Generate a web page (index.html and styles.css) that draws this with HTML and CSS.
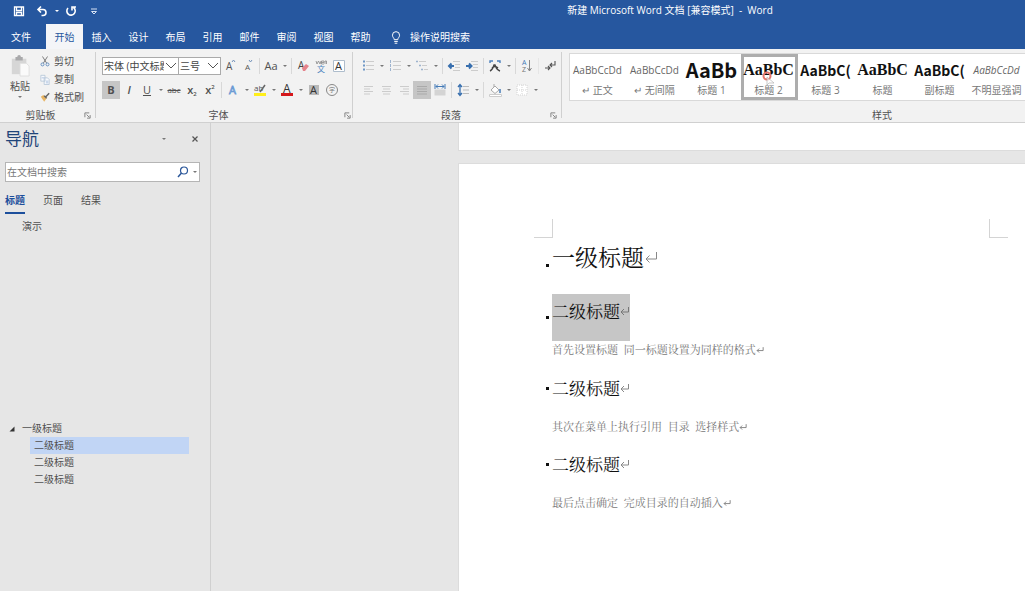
FILE: index.html
```html
<!DOCTYPE html>
<html lang="zh-CN">
<head>
<meta charset="utf-8">
<title>新建 Microsoft Word 文档 [兼容模式] - Word</title>
<link rel="stylesheet" href="styles.css">
</head>
<body>
<header class="top">
  <div class="titlebar">
    <div class="quick">
      <button aria-label="保存"><svg viewBox="0 0 18 18"><path d="M4.500 5h9v8.500h-9z M6.500 5v3.500h5V5 M6.500 13.500v-3h5v3" fill="none" stroke="#fff" stroke-width="1.300"/></svg></button>
      <button aria-label="撤消"><svg viewBox="0 0 18 18"><path d="M5 7.500h5a3 3 0 0 1 0 6H8.500 M8 4.500l-3 3 3 3" fill="none" stroke="#fff" stroke-width="1.600"/></svg></button>
      <button class="caret light" aria-label="撤消选项"></button>
      <button aria-label="重复"><svg viewBox="0 0 18 18"><path d="M6 6a4.200 4.200 0 1 0 5.500-.5 M10 8.500V5h4" fill="none" stroke="#fff" stroke-width="1.600"/></svg></button>
      <button class="customize" aria-label="自定义快速访问工具栏"><svg viewBox="0 0 18 18"><path d="M6 7h6 M6.500 9.500h5L9 12z" fill="none" stroke="#d5e1f3"/></svg></button>
    </div>
    <div class="title">新建 Microsoft Word 文档 [兼容模式]&nbsp; -&nbsp; Word</div>
  </div>
  <nav class="tabs">
    <button class="file">文件</button><button class="active">开始</button><button>插入</button><button>设计</button><button>布局</button><button>引用</button><button>邮件</button><button>审阅</button><button>视图</button><button>帮助</button>
    <button class="tell"><svg viewBox="0 0 18 18"><path d="M7 12c0-2-2-2.500-2-5a4 4 0 0 1 8 0c0 2.500-2 3-2 5z M7 14h4 M7.500 16h3" fill="none" stroke="#fff" stroke-width="1.100"/></svg>操作说明搜索</button>
  </nav>
</header>

<section class="ribbon">
  <div class="group">
    <div class="clipboard">
      <button class="paste"><svg viewBox="0 0 22 24"><path d="M2 4h16v17H2z" fill="#d6d6d6"/><path d="M6 2h2a2 2 0 0 1 4 0h2v4H6z" fill="#a9a9ab"/><path d="M11 9h7l3 3v11H11z" fill="#fafafa" stroke="#ddd"/></svg>粘贴<i class="caret"></i></button>
      <div class="clip-list">
        <button><svg viewBox="0 0 12 12"><path d="M3 0l5 8 M9 0L4 8" fill="none" stroke="#666"/><circle cx="3" cy="9.500" r="1.800" fill="none" stroke="#5383bb"/><circle cx="9" cy="9.500" r="1.800" fill="none" stroke="#5383bb"/></svg>剪切</button>
        <button><svg viewBox="0 0 12 12"><path d="M1 1h5v7H1z M5 4h4l2 2v6H5z" fill="#f7f9fc" stroke="#b6c6d8"/><path d="M2 4h3 M7 8h3 M7 10h3" stroke="#a7bfdd"/></svg>复制</button>
        <button><svg viewBox="0 0 12 12"><path d="M1 5l3-2 4 4-3 4z" fill="#e8b564"/><path d="M5 4l3 3 M7 5l4-4" stroke="#666" stroke-width="1.800"/></svg>格式刷</button>
      </div>
    </div>
    <footer><span>剪贴板</span><button class="launch" aria-label="剪贴板选项"><svg viewBox="0 0 8 8"><path d="M1 6V1h5 M3 3l3 3 M7 3.500V7H3.500" fill="none" stroke="#777"/></svg></button></footer>
  </div>

  <div class="group font-group">
    <div class="tools">
      <div class="row">
        <select class="font" aria-label="字体"><option>宋体 (中文标题)</option></select><select class="size" aria-label="字号"><option>三号</option></select>
        <button aria-label="增大字号"><svg viewBox="0 0 18 18"><text x="5" y="13" font-size="10" fill="#555">A</text><path d="M11 5l1.500-2L14 5" fill="none" stroke="#7392ba"/></svg></button>
        <button aria-label="减小字号"><svg viewBox="0 0 18 18"><text x="6" y="13" font-size="8" fill="#555">A</text><path d="M10 3l1.500 2L13 3" fill="none" stroke="#7392ba"/></svg></button>
        <i class="sep"></i>
        <button class="txt">Aa</button><button class="caret" aria-label="更改大小写选项"></button>
        <i class="sep"></i>
        <button aria-label="清除格式"><svg viewBox="0 0 18 18"><text x="4" y="12" font-size="10" fill="#444">A</text><path d="M8 11l4-4 3 2-4 5H9z" fill="#e5838c"/></svg></button>
        <button aria-label="拼音指南"><svg viewBox="0 0 18 18"><path d="M4 4l1 3 1.500-3L8 7l1-3 M9.500 5.500h2.500V4H9.500v3H12 M13 7V4h1.500v3" fill="none" stroke="#888" stroke-width=".8"/><text x="5" y="15" font-size="8" fill="#4d83bd">文</text></svg></button>
        <button aria-label="字符边框"><svg viewBox="0 0 18 18"><path d="M3.500 3.500h11v11h-11z" fill="#fff" stroke="#aebdcc"/><text x="5" y="13" font-size="11" fill="#333">A</text></svg></button>
      </div>
      <div class="row">
        <button class="on txt bold">B</button><button class="txt italic">I</button><button class="txt under">U</button><button class="caret" aria-label="下划线选项"></button>
        <button class="txt strike">abc</button><button class="txt script">x<sub>2</sub></button><button class="txt script">x<sup>2</sup></button>
        <i class="sep"></i>
        <button aria-label="文本效果"><svg viewBox="0 0 18 18"><text x="5" y="13" font-size="11" fill="#f5faff" stroke="#6d9bd4" stroke-width=".8">A</text></svg></button><button class="caret" aria-label="文本效果选项"></button>
        <button aria-label="突出显示"><svg viewBox="0 0 18 18"><text x="3" y="10" font-size="8" fill="#555">ab</text><path d="M9 11l5-7" stroke="#666" stroke-width="1.500"/><path d="M3 12h12v3H3z" fill="#ffee1a"/></svg></button><button class="caret" aria-label="突出显示选项"></button>
        <button aria-label="字体颜色"><svg viewBox="0 0 18 18"><text x="5" y="12" font-size="12" fill="#333">A</text><path d="M3 12h12v3H3z" fill="#d5171b"/></svg></button><button class="caret" aria-label="字体颜色选项"></button>
        <button aria-label="字符底纹"><svg viewBox="0 0 18 18"><path d="M4 4h10v10H4z" fill="#b9b9b9"/><text x="5" y="13" font-size="11" fill="#333">A</text></svg></button>
        <button aria-label="带圈字符"><svg viewBox="0 0 18 18"><circle cx="9" cy="9" r="5.500" fill="none" stroke="#888"/><text x="6" y="11" font-size="6" fill="#777">字</text></svg></button>
      </div>
    </div>
    <footer><span>字体</span><button class="launch" aria-label="字体选项"><svg viewBox="0 0 8 8"><path d="M1 6V1h5 M3 3l3 3 M7 3.500V7H3.500" fill="none" stroke="#777"/></svg></button></footer>
  </div>

  <div class="group para-group">
    <div class="tools">
      <div class="row">
        <button aria-label="项目符号"><svg viewBox="0 0 18 18"><path d="M7 4.500h8 M7 8.500h8 M7 12.500h8" stroke="#ccc"/><path d="M4 4.500h2 M4 8.500h2 M4 12.500h2" stroke="#6f97c6" stroke-width="2"/></svg></button><button class="caret" aria-label="项目符号选项"></button>
        <button aria-label="编号"><svg viewBox="0 0 18 18"><path d="M7 4.500h8 M7 8.500h8 M7 12.500h8" stroke="#ccc"/><path d="M4.500 3v3 M4.500 7v3 M4.500 11v3" stroke="#9db3ce"/></svg></button><button class="caret" aria-label="编号选项"></button>
        <button aria-label="多级列表"><svg viewBox="0 0 18 18"><path d="M6 4.500h7 M9 8.500h5 M11 12.500h4" stroke="#ccc"/><path d="M3 4.500h2 M6 8.500h2 M8 12.500h2" stroke="#9db3ce" stroke-width="1.500"/></svg></button><button class="caret" aria-label="多级列表选项"></button>
        <i class="sep"></i>
        <button aria-label="减少缩进"><svg viewBox="0 0 18 18"><path d="M8 4.500h7 M10 7.500h5 M10 10.500h5 M8 13.500h7" stroke="#ccc"/><path d="M9 9H4 M6.500 6.500L4 9l2.500 2.500" fill="none" stroke="#386fae" stroke-width="2"/></svg></button>
        <button aria-label="增加缩进"><svg viewBox="0 0 18 18"><path d="M8 4.500h7 M10 7.500h5 M10 10.500h5 M8 13.500h7" stroke="#ccc"/><path d="M3 9h5 M6 6.500L8.500 9 6 11.500" fill="none" stroke="#386fae" stroke-width="2"/></svg></button>
        <i class="sep"></i>
        <button aria-label="中文版式"><svg viewBox="0 0 18 18"><path d="M4 14c2-1 3-3 4-6h1c1 3 2 5 5 6 M6 11c2-2 4-2 6 0" fill="none" stroke="#444" stroke-width="1.400"/><path d="M4 6V4h3 M14 6V4h-3" fill="none" stroke="#4c80bd" stroke-width="1.400"/></svg></button><button class="caret" aria-label="中文版式选项"></button>
        <i class="sep"></i>
        <button aria-label="排序"><svg viewBox="0 0 18 18"><text x="4" y="8" font-size="7" fill="#457bb7">A</text><text x="4" y="15" font-size="7" fill="#777">Z</text><path d="M11.500 3v11 M9.500 11l2 3 2-3" fill="none" stroke="#888"/></svg></button>
        <i class="sep faint"></i>
        <button aria-label="显示编辑标记"><svg viewBox="0 0 18 18"><path d="M14 4v4H9 M11 6L9 8l2 2 M4 11h5 M7 9l2 2-2 2" fill="none" stroke="#555" stroke-width="1.100"/></svg></button>
      </div>
      <div class="row">
        <button aria-label="左对齐"><svg viewBox="0 0 18 18"><path d="M5 5.500h9 M5 8h6 M5 10.500h9 M5 13h6" stroke="#ccc"/></svg></button>
        <button aria-label="居中"><svg viewBox="0 0 18 18"><path d="M5 5.500h9 M6 8h7 M5 10.500h9 M6 13h7" stroke="#ccc"/></svg></button>
        <button aria-label="右对齐"><svg viewBox="0 0 18 18"><path d="M5 5.500h9 M8 8h6 M5 10.500h9 M8 13h6" stroke="#ccc"/></svg></button>
        <button class="on" aria-label="两端对齐"><svg viewBox="0 0 18 18"><path d="M4 5.500h10 M4 8h10 M4 10.500h10 M4 13h10" stroke="#aaa"/></svg></button>
        <button aria-label="分散对齐"><svg viewBox="0 0 18 18"><path d="M4 3v5 M14 3v5 M5 5.500h8 M7 3.500l-2 2 2 2 M11 3.500l2 2-2 2" fill="none" stroke="#457bb7"/><path d="M3.500 8.500h11v6h-11z" fill="#d4d4d4"/></svg></button>
        <i class="sep"></i>
        <button aria-label="行距"><svg viewBox="0 0 18 18"><path d="M9 5.500h6 M9 9h6 M9 12.500h6" stroke="#bbb"/><path d="M6 4v10 M4 6l2-2.500L8 6 M4 12l2 2.500L8 12" fill="none" stroke="#386fae" stroke-width="1.300"/></svg></button><button class="caret" aria-label="行距选项"></button>
        <i class="sep"></i>
        <button aria-label="底纹"><svg viewBox="0 0 18 18"><path d="M5 9l4-4 4 4-4 3.500z M8 6V3" fill="#fff" stroke="#aaa"/><path d="M14 8v4" stroke="#457bb7" stroke-width="1.500"/><path d="M3.500 13.500h12v2h-12z" fill="#fff" stroke="#ccc"/></svg></button><button class="caret" aria-label="底纹选项"></button>
        <button aria-label="边框"><svg viewBox="0 0 18 18"><path d="M4 4h10v10H4z" fill="#fff"/><path d="M4 4h10v10H4z M9 4v10 M4 9h10" fill="none" stroke="#d4d4d4" stroke-dasharray="1 1"/></svg></button><button class="caret" aria-label="边框选项"></button>
      </div>
    </div>
    <footer><span>段落</span><button class="launch" aria-label="段落选项"><svg viewBox="0 0 8 8"><path d="M1 6V1h5 M3 3l3 3 M7 3.500V7H3.500" fill="none" stroke="#777"/></svg></button></footer>
  </div>

  <div class="group styles">
    <div class="gallery">
      <button><b class="s-normal">AaBbCcDd</b><span>↵ 正文</span></button>
      <button><b class="s-normal">AaBbCcDd</b><span>↵ 无间隔</span></button>
      <button><b class="s-h1">AaBb</b><span>标题 1</span></button>
      <button class="picked"><b class="s-serif">AaBbC</b><span>标题 2</span><svg class="pointer" viewBox="0 0 20 20"><circle cx="7" cy="7" r="3.500" fill="none" stroke="#e5766c" stroke-width="2"/><path d="M7 8v8l2-2 5 0z" fill="#fff" fill-opacity=".6" stroke="#aaa" stroke-width=".6"/></svg></button>
      <button><b class="s-h3">AaBbC(</b><span>标题 3</span></button>
      <button><b class="s-serif">AaBbC</b><span>标题</span></button>
      <button><b class="s-h3">AaBbC(</b><span>副标题</span></button>
      <button><b class="s-normal s-subtle">AaBbCcDd</b><span>不明显强调</span></button>
    </div>
    <footer><span>样式</span></footer>
  </div>
</section>

<main class="work">
  <aside class="pane">
    <div class="pane-head"><h2>导航</h2><button class="caret" aria-label="任务窗格选项"></button><button class="close" aria-label="关闭"><svg viewBox="0 0 8 8"><path d="M1.500 1.500l5 5 M6.500 1.500l-5 5" stroke="#555" stroke-width="1.200"/></svg></button></div>
    <div class="search"><input type="text" placeholder="在文档中搜索" aria-label="在文档中搜索"><button aria-label="搜索"><svg viewBox="0 0 12 12"><circle cx="7" cy="4.500" r="3.500" fill="none" stroke="#2b579a" stroke-width="1.200"/><path d="M4.500 7L1 11" stroke="#2b579a" stroke-width="1.500"/></svg></button><button class="caret" aria-label="搜索选项"></button></div>
    <div class="pane-tabs"><button class="active">标题</button><button>页面</button><button>结果</button></div>
    <ul class="outline">
      <li>演示</li>
      <li class="parent"><svg viewBox="0 0 6 6"><path d="M5.500 .5v5h-5z" fill="#333"/></svg>一级标题</li>
      <li class="child current">二级标题</li>
      <li class="child">二级标题</li>
      <li class="child">二级标题</li>
    </ul>
  </aside>
  <div class="canvas">
    <div class="page previous"></div>
    <article class="page">
      <div class="corners"><i></i><i></i></div>
      <h1>一级标题<svg viewBox="0 0 14 14"><path d="M12.500 1v7H2 M5.500 4.500L2 8l3.500 3.500" fill="none" stroke="#888"/></svg></h1>
      <h2 class="selected"><span>二级标题<svg viewBox="0 0 10 12"><path d="M8.500 2v5H1 M4 4L1 7l3 3" fill="none" stroke="#777"/></svg></span></h2>
      <p>首先设置标题&nbsp; 同一标题设置为同样的格式<svg viewBox="0 0 14 14"><path d="M12.500 2v6H2 M5.500 4.500L2 8l3.500 3.500" fill="none" stroke="#777" stroke-width="1.500"/></svg></p>
      <h2><span>二级标题<svg viewBox="0 0 10 12"><path d="M8.500 2v5H1 M4 4L1 7l3 3" fill="none" stroke="#888"/></svg></span></h2>
      <p>其次在菜单上执行引用&nbsp; 目录&nbsp; 选择样式<svg viewBox="0 0 14 14"><path d="M12.500 2v6H2 M5.500 4.500L2 8l3.500 3.500" fill="none" stroke="#777" stroke-width="1.500"/></svg></p>
      <h2><span>二级标题<svg viewBox="0 0 10 12"><path d="M8.500 2v5H1 M4 4L1 7l3 3" fill="none" stroke="#888"/></svg></span></h2>
      <p>最后点击确定&nbsp; 完成目录的自动插入<svg viewBox="0 0 14 14"><path d="M12.500 2v6H2 M5.500 4.500L2 8l3.500 3.500" fill="none" stroke="#777" stroke-width="1.500"/></svg></p>
    </article>
  </div>
</main>
</body>
</html>
```
FILE: styles.css
```css
* { box-sizing: border-box; }
html, body { height: 100%; margin: 0; }
body {
  display: flex;
  flex-direction: column;
  overflow: hidden;
  background: #e6e6e6;
  color: #505050;
  font: 10px/14px "Open Sans", "Noto Sans CJK SC", sans-serif;
}
button {
  display: flex;
  align-items: center;
  justify-content: center;
  flex: none;
  margin: 0;
  padding: 0;
  border: 0;
  background: none;
  color: inherit;
  font: inherit;
  white-space: nowrap;
}
svg { display: block; flex: none; }
h1, h2, p, ul { margin: 0; padding: 0; font-weight: 400; }

.caret { width: 9px; height: 18px; display: flex; align-items: center; justify-content: center; }
.caret::after { content: ""; border: 2px solid transparent; border-top-color: #777; border-bottom: 0; }
.caret.light::after { border-top-color: #fff; }

/* Title bar and tabs */
.top { flex: none; background: #26579f; color: #fff; }
.titlebar { display: flex; align-items: center; height: 24px; padding-left: 10px; }
.quick { display: flex; align-items: center; padding-bottom: 2px; }
.quick button:not(.caret) { width: 18px; height: 18px; }
.quick button:nth-child(2) { margin-left: 5px; }
.quick .caret { width: 11px; }
.quick .customize { margin-left: 5px; }
.quick svg { width: 18px; height: 18px; }
.title { flex: 1; padding: 0 0 4px 212px; text-align: center; white-space: nowrap; }
.tabs { display: flex; height: 25px; }
.tabs button { width: 37px; }
.tabs .file { width: 42px; margin-right: 4px; }
.tabs .active { background: #f4f5f8; color: #26579f; }
.tabs .tell { width: auto; margin-left: 8px; gap: 5px; }
.tell svg { width: 18px; height: 16px; }

/* Ribbon */
.ribbon { display: flex; flex: none; height: 74px; background: #f2f2f2; border-bottom: 1px solid #d0d0d0; }
.group { display: flex; flex-direction: column; flex: none; justify-content: space-between; padding: 3px 5px 0 6px; position: relative; }
.group:not(.styles)::after { content: ""; position: absolute; right: 0; top: 3px; bottom: 4px; width: 1px; background: #d0d0d0; }
.group footer { display: flex; align-items: center; height: 14px; }
.group footer span { flex: 1; text-align: center; }
.font-group { padding-right: 2px; width: 257px; }
.font-group footer span { padding-right: 8px; }
.para-group { width: 209px; }
.para-group footer span { padding-right: 6px; }
.launch { width: 8px; height: 8px; }
.launch svg { width: 7px; height: 7px; }
.clipboard { display: flex; gap: 6px; width: 85px; }
.clipboard + footer span { padding-right: 8px; }
.paste { flex-direction: column; justify-content: flex-start; width: 28px; padding-top: 3px; }
.paste svg { width: 20px; height: 22px; margin-bottom: 2px; }
.paste .caret { height: 8px; }
.clip-list { display: flex; flex-direction: column; align-items: flex-start; }
.clip-list button { height: 18px; gap: 4px; }
.clip-list svg { width: 10px; height: 11px; }
.tools { display: flex; flex-direction: column; gap: 6px; padding-top: 5px; }
.row { display: flex; align-items: center; height: 18px; }
.row button:not(.caret) { width: 18px; height: 18px; }
.row svg { width: 18px; height: 18px; }
.row select {
  height: 18px;
  padding: 0 14px 0 1px;
  border: 1px solid #aaa;
  border-radius: 0;
  appearance: none;
  background: #fff url("data:image/svg+xml,%3Csvg xmlns='http://www.w3.org/2000/svg' viewBox='0 0 12 8'%3E%3Cpath d='M1 1l5 5 5-5' fill='none' stroke='%23555'/%3E%3C/svg%3E") no-repeat right 1px center / 12px 8px;
  color: #444;
  font: inherit;
}
.row .font { width: 77px; }
.row .size { width: 42px; border-left: 0; }
.sep { flex: none; width: 1px; height: 16px; margin: 0 2px; background: #d8d8d8; }
.faint { background: #e6e6e6; }
.on { background: #c6c6c6; }
.txt { font-size: 11px; }
.bold { font-weight: 700; }
.italic { font-style: italic; font-weight: 600; }
.under { text-decoration: underline; }
.strike { font-size: 8px; text-decoration: line-through; }
.script { font-weight: 600; }
.txt sub, .txt sup { font-size: 6px; line-height: 6px; }
.txt sub { align-self: flex-end; padding-bottom: 2px; }
.txt sup { align-self: flex-start; padding-top: 3px; }

/* Style gallery */
.ribbon .styles { flex: 1; min-width: 0; padding: 4px 0 0 7px; }
.styles footer { padding-left: 170px; }
.gallery { display: flex; height: 48px; overflow: hidden; border: 1px solid #d9d9d9; border-right: 0; background: #fff; }
.gallery button { position: relative; flex-direction: column; justify-content: flex-start; width: 57px; height: 46px; padding: 3px 5px 0 3px; color: #777; }
.gallery b { display: block; line-height: 26px; color: #111; }
.gallery .s-normal { color: #666; font-weight: 400; }
.gallery .s-subtle { font-style: italic; }
.s-h1 { font-family: "Noto Sans CJK SC", sans-serif; font-size: 20px; }
.s-h3 { font-family: "Noto Sans CJK SC", sans-serif; font-size: 14px; }
.s-serif { font-family: "Liberation Serif", serif; font-size: 16px; }
.gallery .picked { box-shadow: inset 0 0 0 3px #adadad; }
.pointer { position: absolute; left: 19px; top: 15px; width: 20px; height: 20px; }

/* Navigation pane */
.work { display: flex; flex: 1; min-height: 0; }
.pane { flex: none; width: 211px; border-right: 1px solid #d0d0d0; }
.pane-head { display: flex; align-items: center; height: 31px; padding: 0 11px 0 5px; }
.pane-head h2 { flex: 1; color: #1f4479; font-size: 17px; line-height: 24px; }
.close { width: 8px; height: 8px; margin-left: 23px; }
.close svg { width: 8px; height: 8px; }
.search { display: flex; align-items: center; height: 20px; margin: 8px 10px 0 5px; border: 1px solid #b5b5b5; background: #fff; }
.search input { flex: 1; min-width: 0; padding: 0 1px; border: 0; outline: 0; background: none; color: #444; font: inherit; }
.search input::placeholder { color: #777; }
.search svg { width: 12px; height: 12px; }
.search .caret { margin-left: 1px; }
.pane-tabs { display: flex; gap: 18px; padding: 9px 5px 0; }
.pane-tabs button { height: 23px; padding-bottom: 3px; border-bottom: 2px solid transparent; }
.pane-tabs .active { border-color: #1d4f9c; color: #1d4f9c; font-weight: 700; }
.outline { padding: 4px 21px 0 22px; list-style: none; line-height: 17px; }
.parent { display: flex; align-items: center; gap: 7px; margin: 185px 0 0 -13px; }
.parent svg { width: 6px; height: 6px; }
.child { margin-left: 8px; padding-left: 4px; }
.current { background: #c1d5f5; }

/* Document */
.canvas { flex: 1; min-width: 0; overflow: hidden; padding-left: 247px; }
.page { min-height: 100%; border: 1px solid #dcdcdc; border-width: 1px 0 0 1px; background: #fff; color: #111; padding: 55px 0 0 93px; font-family: "Noto Serif CJK SC", SimSun, "Noto Sans CJK SC", serif; }
.previous { min-height: 28px; margin-bottom: 12px; padding: 0; border-width: 0 0 1px 1px; }
.corners { display: flex; justify-content: space-between; margin: 0 17px 0 -18px; }
.corners i { width: 19px; height: 19px; border: 1px solid #d4d4d4; border-width: 0 1px 1px 0; }
.corners i:last-child { border-width: 0 0 1px 1px; }
.page h1, .page h2 { display: flex; }
.page h1::before, .page h2::before { content: ""; flex: none; width: 3px; height: 3px; margin: 16px 3px 0 -6px; background: #111; }
.page h1 { height: 56px; font-size: 23px; line-height: 38px; }
.page h1::before { margin-top: 26px; }
.page h1 svg { width: 14px; height: 14px; margin-top: 13px; }
.page h2 { height: 47px; font-size: 17px; line-height: 33px; }
.page h2 span { display: flex; }
.page h2 svg { width: 10px; height: 12px; margin-top: 11px; }
.page .selected::before { margin-top: 22px; }
.selected span { background: #c6c6c6; }
.page p { display: flex; height: 29px; color: #777; font-size: 11px; line-height: 16px; }
.page p svg { width: 8px; height: 8px; margin-top: 5px; }
.page .selected + p { height: 30px; }
```
